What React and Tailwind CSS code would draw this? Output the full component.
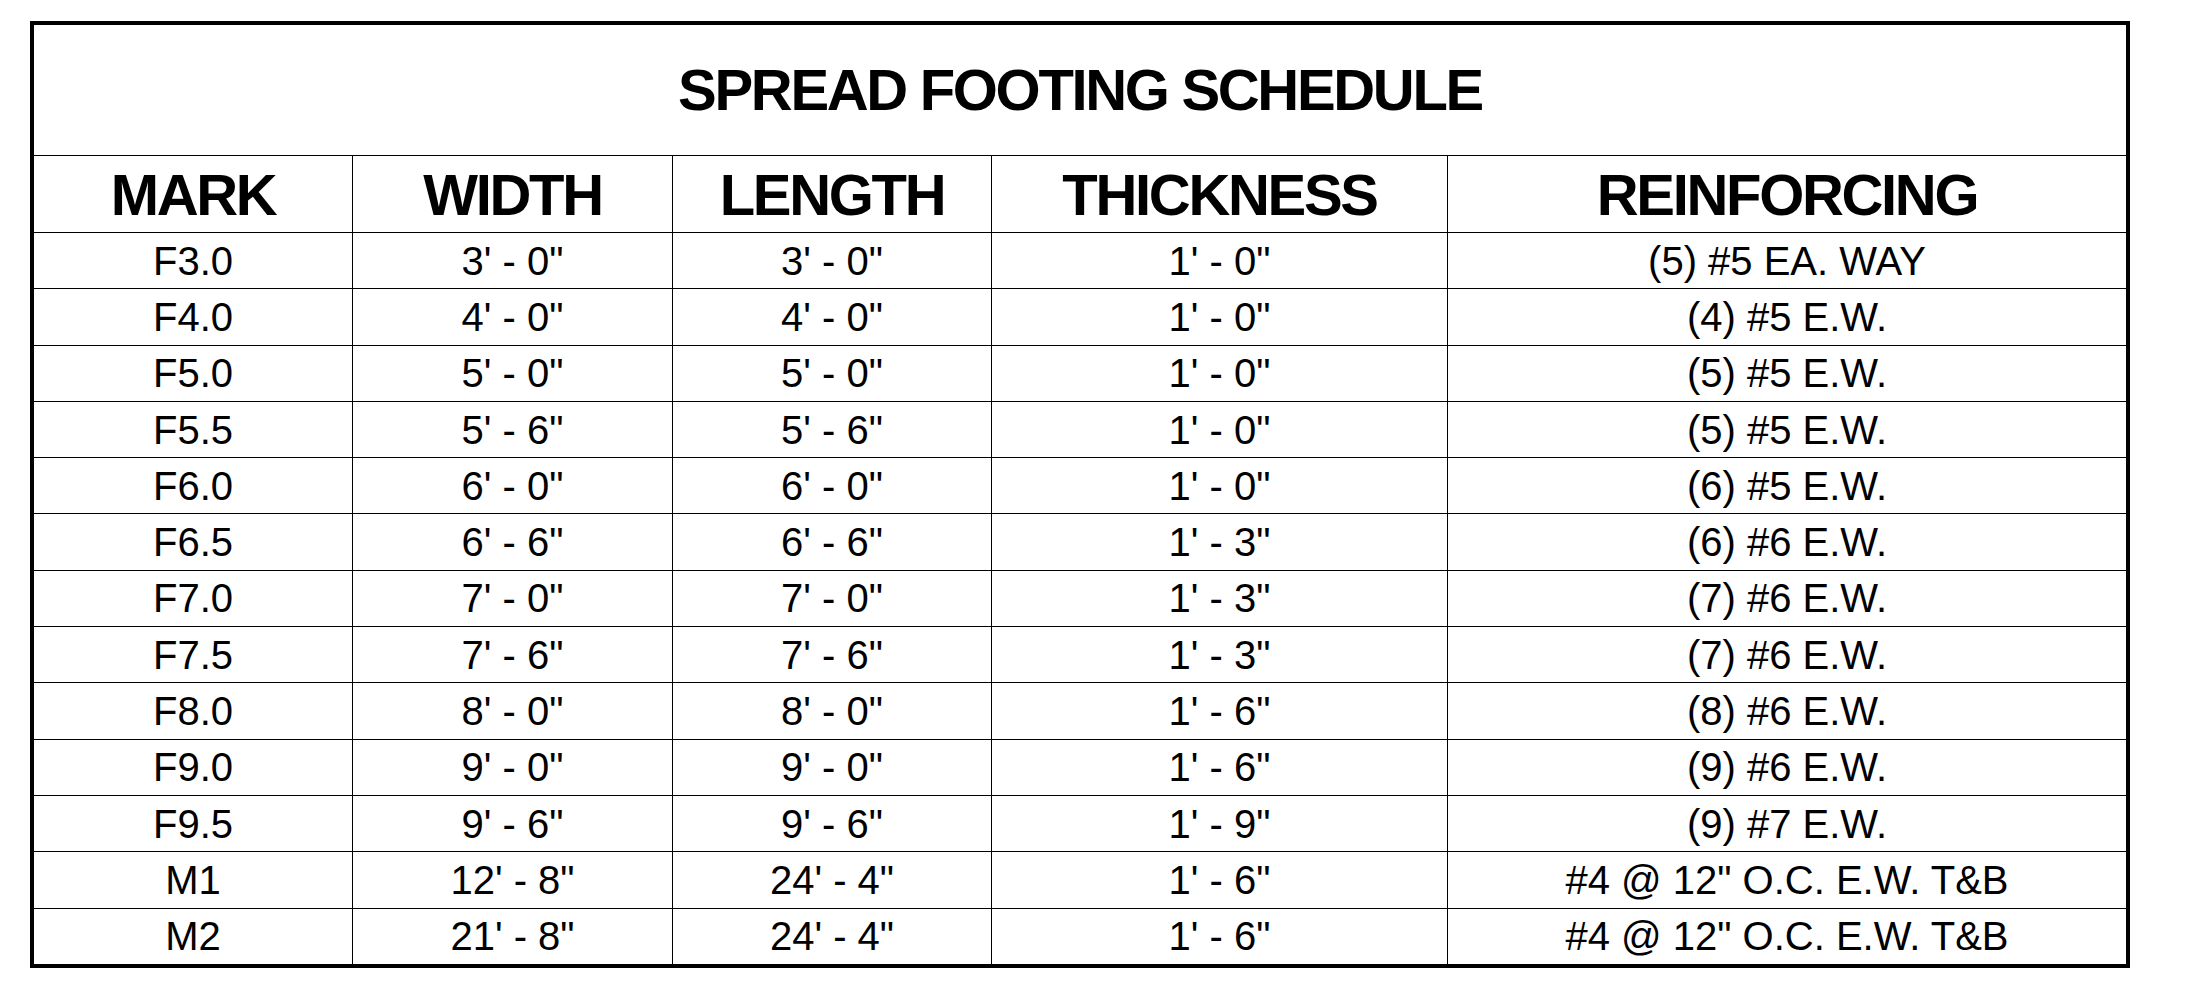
import React from 'react';

const HEADERS = ['MARK', 'WIDTH', 'LENGTH', 'THICKNESS', 'REINFORCING'];

const ROWS = [
  ['F3.0', `3' - 0"`, `3' - 0"`, `1' - 0"`, '(5) #5 EA. WAY'],
  ['F4.0', `4' - 0"`, `4' - 0"`, `1' - 0"`, '(4) #5 E.W.'],
  ['F5.0', `5' - 0"`, `5' - 0"`, `1' - 0"`, '(5) #5 E.W.'],
  ['F5.5', `5' - 6"`, `5' - 6"`, `1' - 0"`, '(5) #5 E.W.'],
  ['F6.0', `6' - 0"`, `6' - 0"`, `1' - 0"`, '(6) #5 E.W.'],
  ['F6.5', `6' - 6"`, `6' - 6"`, `1' - 3"`, '(6) #6 E.W.'],
  ['F7.0', `7' - 0"`, `7' - 0"`, `1' - 3"`, '(7) #6 E.W.'],
  ['F7.5', `7' - 6"`, `7' - 6"`, `1' - 3"`, '(7) #6 E.W.'],
  ['F8.0', `8' - 0"`, `8' - 0"`, `1' - 6"`, '(8) #6 E.W.'],
  ['F9.0', `9' - 0"`, `9' - 0"`, `1' - 6"`, '(9) #6 E.W.'],
  ['F9.5', `9' - 6"`, `9' - 6"`, `1' - 9"`, '(9) #7 E.W.'],
  ['M1', `12' - 8"`, `24' - 4"`, `1' - 6"`, '#4 @ 12" O.C. E.W. T&B'],
  ['M2', `21' - 8"`, `24' - 4"`, `1' - 6"`, '#4 @ 12" O.C. E.W. T&B'],
];

export default function App() {
  return (
    <div
      className="min-h-[1000px] w-full bg-white pt-[21px] pl-[30px] text-black"
      style={{ fontFamily: '"Liberation Sans", Arial, sans-serif' }}
    >
      <div className="w-[2100px] border-4 border-black bg-white">
        {/* Title */}
        <div className="flex h-[131px] items-center justify-center border-b border-black">
          <h1 className="text-[58px] font-bold leading-none tracking-[-0.04em]">
            SPREAD FOOTING SCHEDULE
          </h1>
        </div>

        {/* Schedule grid */}
        <div className="grid grid-cols-[318px_319px_318px_455px_1fr] grid-rows-[76px] auto-rows-[55.3px] gap-px bg-black">
          {HEADERS.map((h) => (
            <div
              key={h}
              className="flex items-center justify-center bg-white pt-[2px] text-[58px] font-bold leading-none tracking-[-0.04em]"
            >
              {h}
            </div>
          ))}
          {ROWS.map((row, i) =>
            row.map((cell, j) => (
              <div
                key={`${i}-${j}`}
                className="flex items-center justify-center bg-white text-[40px] leading-none whitespace-pre"
              >
                {cell}
              </div>
            ))
          )}
        </div>
      </div>
    </div>
  );
}
